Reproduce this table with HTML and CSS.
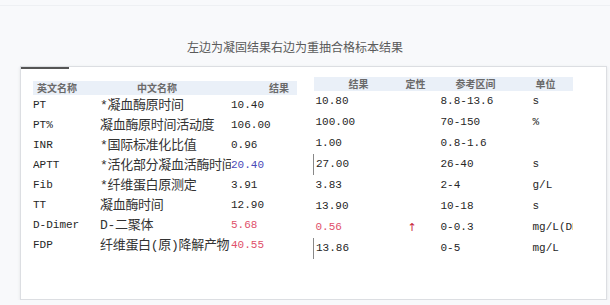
FILE: index.html
```html
<!DOCTYPE html>
<html>

<head>
    <title>凝固结果对比</title>
    <link rel="stylesheet" href="styles.css">
</head>

<body>
    <div class="topline"></div>
    <p class="caption">左边为凝固结果右边为重抽合格标本结果</p>
    <div class="card">
        <div class="tab-mark"></div>
        <table class="left">
            <colgroup>
                <col class="c-en">
                <col class="c-cn">
                <col class="c-res">
            </colgroup>
            <thead>
                <tr>
                    <th class="h-en">英文名称</th>
                    <th class="h-cn">中文名称</th>
                    <th class="h-res">结果</th>
                </tr>
            </thead>
            <tbody>
                <tr><td>PT</td><td>*凝血酶原时间</td><td>10.40</td></tr>
                <tr><td>PT%</td><td>凝血酶原时间活动度</td><td>106.00</td></tr>
                <tr><td>INR</td><td>*国际标准化比值</td><td>0.96</td></tr>
                <tr><td>APTT</td><td>*活化部分凝血活酶时间</td><td class='low'>20.40</td></tr>
                <tr><td>Fib</td><td>*纤维蛋白原测定</td><td>3.91</td></tr>
                <tr><td>TT</td><td>凝血酶时间</td><td>12.90</td></tr>
                <tr><td>D-Dimer</td><td>D-二聚体</td><td class='high'>5.68</td></tr>
                <tr><td>FDP</td><td>纤维蛋白(原)降解产物</td><td class='high'>40.55</td></tr>
            </tbody>
        </table>
        <table class="right">
            <colgroup>
                <col class="c-val">
                <col class="c-flag">
                <col class="c-range">
                <col class="c-unit">
            </colgroup>
            <thead>
                <tr>
                    <th>结果</th>
                    <th>定性</th>
                    <th>参考区间</th>
                    <th>单位</th>
                </tr>
            </thead>
            <tbody>
                <tr><td>10.80</td><td></td><td>8.8-13.6</td><td>s</td></tr>
                <tr><td>100.00</td><td></td><td>70-150</td><td>%</td></tr>
                <tr><td>1.00</td><td></td><td>0.8-1.6</td><td></td></tr>
                <tr><td class='cursor'>27.00</td><td></td><td>26-40</td><td>s</td></tr>
                <tr><td>3.83</td><td></td><td>2-4</td><td>g/L</td></tr>
                <tr><td>13.90</td><td></td><td>10-18</td><td>s</td></tr>
                <tr><td class='high'>0.56</td><td class='flag'>↑</td><td>0-0.3</td><td>mg/L(DDU)</td></tr>
                <tr><td class='cursor'>13.86</td><td></td><td>0-5</td><td>mg/L</td></tr>
            </tbody>
        </table>
    </div>
</body>

</html>
```

FILE: styles.css
```css
body {
    margin: 0;
    background-color: #F8F9FB;
    font-family: "Liberation Mono", "Noto Sans CJK SC", monospace;
    color: #262626;
}
.topline {
    height: 5px;
    border-bottom: 1px solid #EEF0F3;
}
.caption {
    margin: 34px 0 0 0;
    height: 26px;
    text-align: center;
    font-family: "Noto Sans CJK SC", sans-serif;
    font-size: 12px;
    line-height: 14px;
    color: #5A5A5A;
    padding-right: 20px;
}
.card {
    position: relative;
    display: flex;
    align-items: flex-start;
    margin: 0 3px 0 20px;
    height: 232px;
    background-color: white;
    border: 1px solid #DCDEE2;
    box-shadow: 0 1px 3px #E2E4E8;
}
.tab-mark {
    position: absolute;
    left: 0;
    top: 0;
    width: 48px;
    height: 2px;
    background-color: #555;
}
table {
    border-collapse: collapse;
    table-layout: fixed;
    font-size: 11px;
}
td {
    padding: 0;
    line-height: 15px;
    white-space: nowrap;
    overflow: hidden;
    text-overflow: clip;
}
th {
    padding: 0;
    font-family: "Noto Sans CJK SC", sans-serif;
    font-size: 10px;
    font-weight: bold;
    color: #6A6A6A;
    background-color: #EAF0F8;
    overflow: hidden;
    white-space: nowrap;
}
.left {
    margin: 14px 0 0 12px;
    width: 264px;
}
.left th {
    height: 14px;
    line-height: 14px;
}
.left tbody tr {
    height: 20px;
}
.left td:nth-child(2) {
    font-size: 13px;
    letter-spacing: -0.3px;
    color: #333;
}
.c-en { width: 67px; }
.c-cn { width: 131px; }
.c-res { width: 66px; }
.h-en {
    text-align: left;
    padding-left: 4px;
}
.h-cn {
    text-align: left;
    padding-left: 37px;
}
.h-res {
    text-align: right;
    padding-right: 8px;
}
.right {
    margin: 10px 0 0 16px;
    width: 259px;
}
.right th {
    height: 14px;
    line-height: 14px;
}
.right th:nth-child(1) { text-align: center; }
.right th:nth-child(2) { text-align: left; padding-left: 2px; }
.right th:nth-child(3) { text-align: left; padding-left: 17px; }
.right th:nth-child(4) { text-align: left; padding-left: 5px; }
.right tbody tr {
    height: 21px;
}
.right td:nth-child(1),
.right td:nth-child(3),
.right td:nth-child(4) {
    padding-left: 2px;
}
.c-val { width: 90px; }
.c-flag { width: 35px; }
.c-range { width: 92px; }
.c-unit { width: 42px; }
.high {
    color: #E0506A;
}
.low {
    color: #4A4AB8;
}
.flag {
    color: #C8283C;
    padding-left: 4px;
    font-family: "DejaVu Sans", sans-serif;
}
.cursor {
    border-left: 1px solid #888;
}
```
